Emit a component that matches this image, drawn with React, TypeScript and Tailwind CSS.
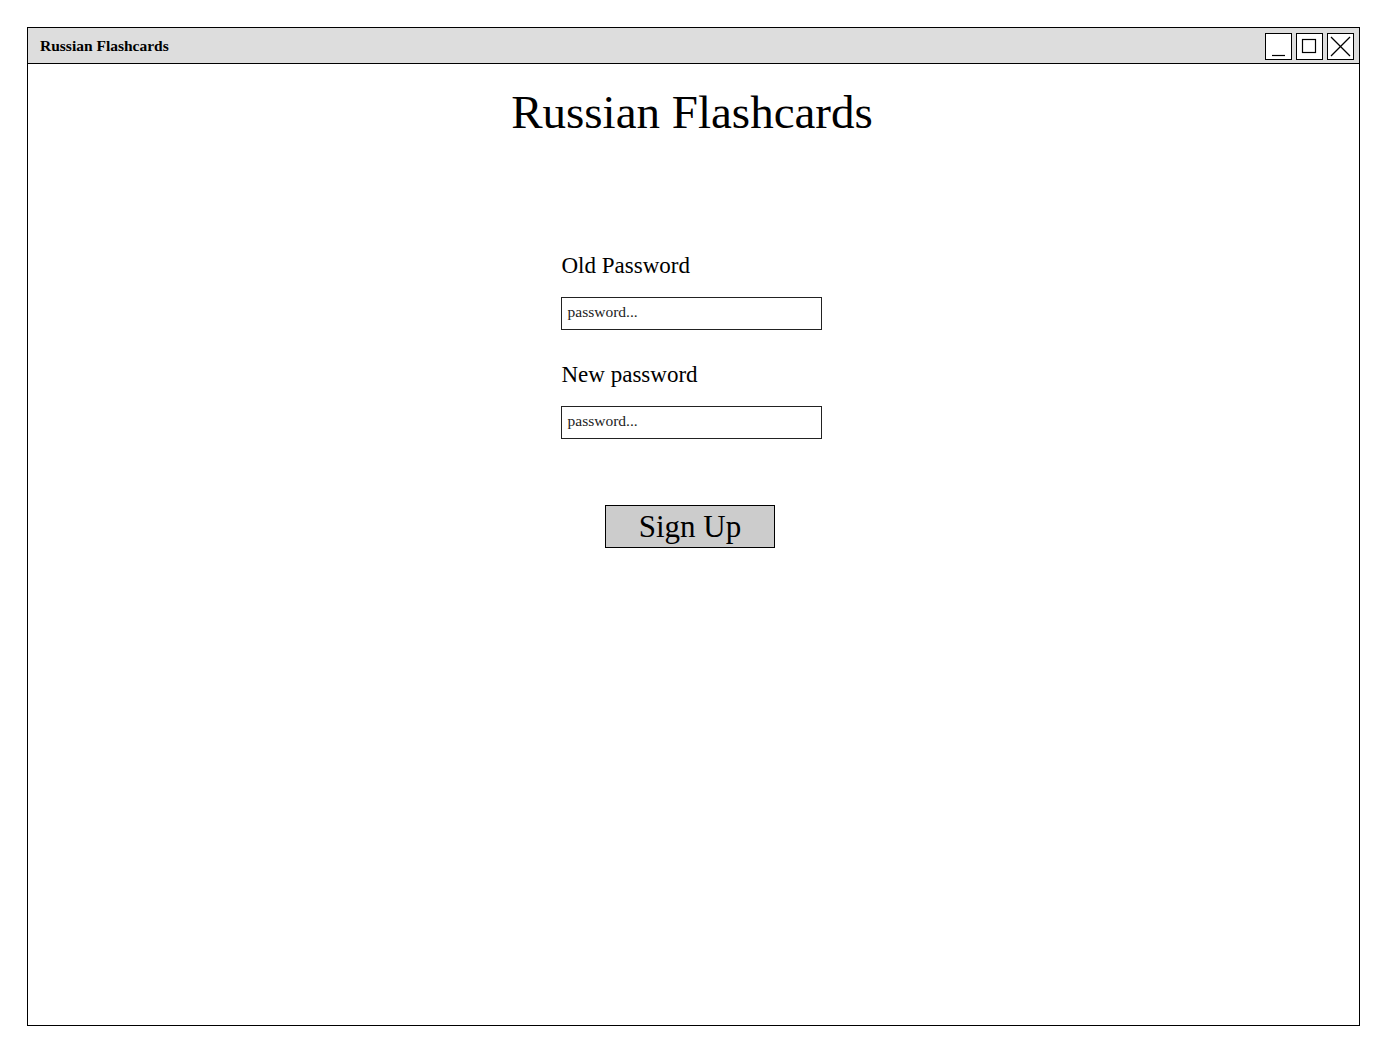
const serif = { fontFamily: '"Liberation Serif", "Times New Roman", serif' };

function WinButton({ kind }: { kind: 'min' | 'max' | 'close' }) {
  return (
    <div className="w-[27px] h-[27px] border border-black bg-white flex items-center justify-center">
      <svg width="25" height="25" viewBox="0 0 25 25" fill="none" stroke="black" strokeWidth="1.2">
        {kind === 'min' && <line x1="6" y1="21.5" x2="19" y2="21.5" />}
        {kind === 'max' && <rect x="5.5" y="5.5" width="13" height="13" />}
        {kind === 'close' && (
          <>
            <line x1="3" y1="3" x2="22" y2="22" />
            <line x1="22" y1="3" x2="3" y2="22" />
          </>
        )}
      </svg>
    </div>
  );
}

const fields = ['Old Password', 'New password'];

export default function App() {
  return (
    <div className="bg-white min-h-[1053px] pt-[27px] pl-[27px]" style={serif}>
      <div className="w-[1333px] h-[999px] border border-black flex flex-col">
        <div className="h-[36px] bg-[#dddddd] border-b border-black flex items-center justify-between pl-[12px] pr-[5px]">
          <span className="text-[15.5px] font-bold text-black mt-[1px]">Russian Flashcards</span>
          <div className="flex gap-[4px] mt-[1px]">
            <WinButton kind="min" />
            <WinButton kind="max" />
            <WinButton kind="close" />
          </div>
        </div>

        <div className="flex-1 flex flex-col items-center pt-[25px] pr-[3px]">
          <h1 className="text-[47px] leading-[47px] text-black">Russian Flashcards</h1>

          <div className="w-[261px] mt-[118px] mr-[2px] flex flex-col">
            {fields.map((label, i) => (
              <div key={label} className={i > 0 ? 'mt-[33px]' : ''}>
                <div className="text-[23px] leading-[23px] text-black pl-[1px]">{label}</div>
                <div className="mt-[20px] h-[33px] border border-[#222] flex items-center px-[6px] pb-[3px]">
                  <span className="text-[15.5px] text-[#222]">password...</span>
                </div>
              </div>
            ))}
          </div>

          <button className="mt-[66px] mr-[4px] w-[170px] h-[43px] bg-[#cccccc] border border-black text-[31px] leading-none text-black flex items-center justify-center">
            Sign Up
          </button>
        </div>
      </div>
    </div>
  );
}
